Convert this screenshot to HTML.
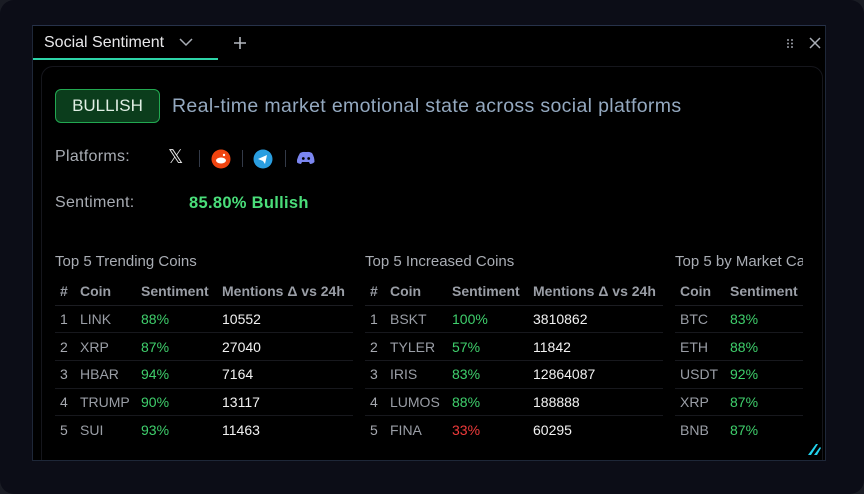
<!DOCTYPE html>
<html><head><style>
*{margin:0;padding:0;box-sizing:border-box}
body{width:864px;height:494px;background:#1a1c24;font-family:"Liberation Sans",sans-serif;overflow:hidden;position:relative}
.outer{position:absolute;left:0;top:0;width:864px;height:494px;background:#0c0d17;border-radius:14px}
.panel{position:absolute;left:32px;top:25px;width:794px;height:436px;background:#000;border:1px solid #1e2738;border-top-color:#27324a;overflow:hidden}
.tab{position:absolute;left:0;top:0;width:185px;height:34px;border-bottom:2px solid #2dd4a8;color:#e8e8ea;font-size:16px;padding:8px 0 0 11px}
.card{position:absolute;left:8px;top:40px;width:782px;height:420px;border:1px solid #15161c;border-radius:12px}
.abs{position:absolute;white-space:nowrap}
.badge{left:22px;top:63px;width:105px;height:34px;border:1.5px solid #22a851;background:#0b3d1c;border-radius:6px;color:#e0efe4;font-size:17px;text-align:center;line-height:31px}
.g{color:#3fcf6c}.r{color:#ef3b3b}
table{position:absolute;border-collapse:collapse;font-size:14px}
td,th{height:27.7px;padding:0;text-align:left;white-space:nowrap}
th{color:#9a9ea6;font-weight:bold;height:28px}
tr+tr td{border-top:1.5px solid #17181d}
tr:nth-child(2) td{border-top:1.5px solid #1c1d22}
td.c{color:#9a9ea6} td.n{color:#a6a9b0} td.w{color:#f2f2f2}
.h{color:#a9adb4;font-size:15px}
</style></head><body>
<div class="outer"></div>
<div class="panel">
 <div class="tab">Social Sentiment <svg width="14" height="10" style="margin-left:10px" viewBox="0 0 14 10"><path d="M1 2l6 6 6-6" stroke="#a9aeb6" stroke-width="1.5" fill="none"/></svg></div>
 <svg class="abs" style="left:200px;top:10px" width="14" height="14"><path d="M7 1v12M1 7h12" stroke="#b4b8bf" stroke-width="1.6"/></svg>
 <svg class="abs" style="left:753px;top:12px" width="8" height="11"><g fill="#9a9ea6"><circle cx="2" cy="2" r="1"/><circle cx="6" cy="2" r="1"/><circle cx="2" cy="5.5" r="1"/><circle cx="6" cy="5.5" r="1"/><circle cx="2" cy="9" r="1"/><circle cx="6" cy="9" r="1"/></g></svg>
 <svg class="abs" style="left:776px;top:11px" width="12" height="12"><path d="M1 1l10 10M11 1L1 11" stroke="#a9aeb6" stroke-width="1.5"/></svg>
 <div class="card"></div>
 <div class="abs badge">BULLISH</div>
 <div class="abs" style="left:139px;top:69px;font-size:19.5px;letter-spacing:0.35px;color:#94a9c0">Real-time market emotional state across social platforms</div>
 <div class="abs" style="left:22px;top:122px;font-size:16px;letter-spacing:0.3px;color:#a8acb3">Platforms:</div>
 <div class="abs" style="left:135px;top:122px;font-size:19px;color:#e8e8e8;line-height:19px">𝕏</div>
 <div class="abs" style="left:166px;top:124px;width:1px;height:17px;background:#333a48"></div>
 <svg class="abs" style="left:178px;top:123px" width="20" height="20"><circle cx="10" cy="10" r="9.5" fill="#f04410"/><ellipse cx="10" cy="11.5" rx="5" ry="3" fill="#fff"/><circle cx="13" cy="6" r="1.2" fill="#fff"/></svg>
 <div class="abs" style="left:209px;top:124px;width:1px;height:17px;background:#333a48"></div>
 <svg class="abs" style="left:220px;top:123px" width="20" height="20"><circle cx="10" cy="10" r="9.5" fill="#2a9ee0"/><path d="M5 10l9-4-2 9-2-3z" fill="#fff"/></svg>
 <div class="abs" style="left:252px;top:124px;width:1px;height:17px;background:#333a48"></div>
 <svg class="abs" style="left:264px;top:125px" width="18" height="14"><path d="M3 2q3-1.5 5-1h2q2-.5 5 1 2.5 4 2.5 9-2 2-4.5 2l-1-2h-7l-1 2q-2.5 0-4.5-2Q.5 6 3 2z" fill="#7b86f0"/><circle cx="6.3" cy="7.5" r="1.4" fill="#000"/><circle cx="11.7" cy="7.5" r="1.4" fill="#000"/></svg>
 <div class="abs" style="left:22px;top:168px;font-size:16px;letter-spacing:0.3px;color:#a8acb3">Sentiment:</div>
 <div class="abs g" style="left:156px;top:168px;font-size:16.5px;letter-spacing:0.3px;font-weight:bold;color:#4ade7a">85.80% Bullish</div>

 <div class="abs h" style="left:22px;top:227px">Top 5 Trending Coins</div>
 <table style="left:22px;top:251px;width:298px">
  <tr><th style="width:25px;padding-left:5px">#</th><th style="width:61px">Coin</th><th style="width:81px">Sentiment</th><th>Mentions Δ vs 24h</th></tr>
  <tr><td class="n" style="padding-left:5px">1</td><td class="c">LINK</td><td class="g">88%</td><td class="w">10552</td></tr>
  <tr><td class="n" style="padding-left:5px">2</td><td class="c">XRP</td><td class="g">87%</td><td class="w">27040</td></tr>
  <tr><td class="n" style="padding-left:5px">3</td><td class="c">HBAR</td><td class="g">94%</td><td class="w">7164</td></tr>
  <tr><td class="n" style="padding-left:5px">4</td><td class="c">TRUMP</td><td class="g">90%</td><td class="w">13117</td></tr>
  <tr><td class="n" style="padding-left:5px">5</td><td class="c">SUI</td><td class="g">93%</td><td class="w">11463</td></tr>
 </table>

 <div class="abs h" style="left:332px;top:227px">Top 5 Increased Coins</div>
 <table style="left:332px;top:251px;width:298px">
  <tr><th style="width:25px;padding-left:5px">#</th><th style="width:62px">Coin</th><th style="width:81px">Sentiment</th><th>Mentions Δ vs 24h</th></tr>
  <tr><td class="n" style="padding-left:5px">1</td><td class="c">BSKT</td><td class="g">100%</td><td class="w">3810862</td></tr>
  <tr><td class="n" style="padding-left:5px">2</td><td class="c">TYLER</td><td class="g">57%</td><td class="w">11842</td></tr>
  <tr><td class="n" style="padding-left:5px">3</td><td class="c">IRIS</td><td class="g">83%</td><td class="w">12864087</td></tr>
  <tr><td class="n" style="padding-left:5px">4</td><td class="c">LUMOS</td><td class="g">88%</td><td class="w">188888</td></tr>
  <tr><td class="n" style="padding-left:5px">5</td><td class="c">FINA</td><td class="r">33%</td><td class="w">60295</td></tr>
 </table>

 <div style="position:absolute;left:642px;top:220px;width:128px;height:215px;overflow:hidden">
  <div class="abs h" style="left:0;top:7px">Top 5 by Market Cap</div>
  <table style="left:0;top:31px;width:200px">
   <tr><th style="width:55px;padding-left:5px">Coin</th><th>Sentiment</th></tr>
   <tr><td class="c" style="padding-left:5px">BTC</td><td class="g">83%</td></tr>
   <tr><td class="c" style="padding-left:5px">ETH</td><td class="g">88%</td></tr>
   <tr><td class="c" style="padding-left:5px">USDT</td><td class="g">92%</td></tr>
   <tr><td class="c" style="padding-left:5px">XRP</td><td class="g">87%</td></tr>
   <tr><td class="c" style="padding-left:5px">BNB</td><td class="g">87%</td></tr>
  </table>
 </div>
 <svg class="abs" style="left:774px;top:416px" width="16" height="14"><path d="M1 13L9 2h2L4 13zM7 13l6-8 1 1-4 7z" fill="#22d3ee"/></svg>
</div>
</body></html>
